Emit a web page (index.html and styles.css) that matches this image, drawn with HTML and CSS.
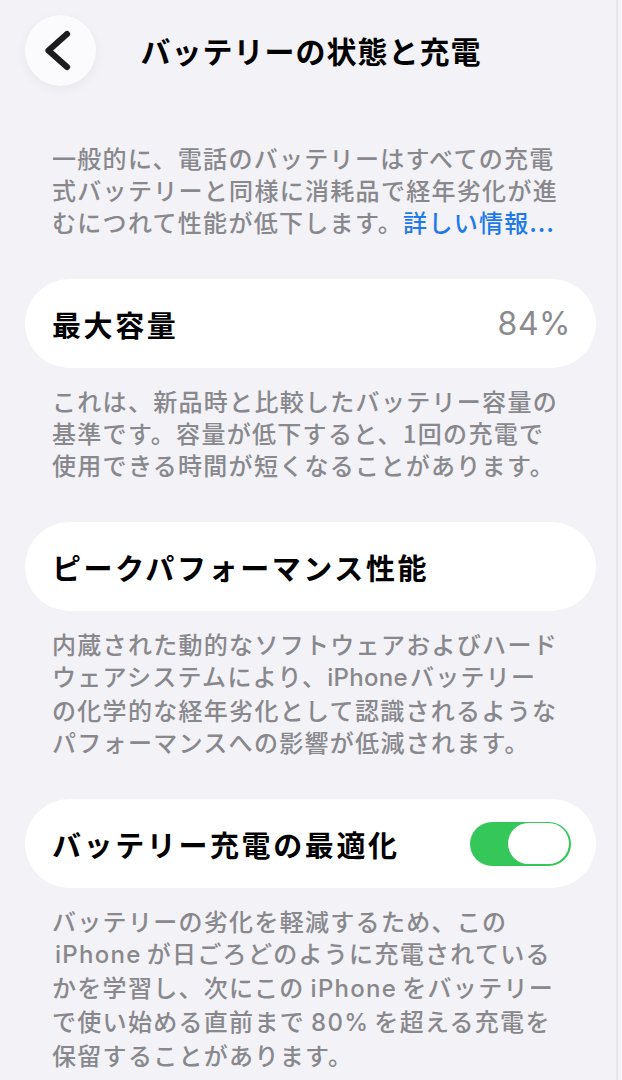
FILE: index.html
```html
<!DOCTYPE html>
<html lang="ja">
<head>
<meta charset="utf-8">
<title>バッテリーの状態と充電</title>
<link rel="stylesheet" href="styles.css">
</head>
<body>
<div class="page">
  <header class="header">
    <button class="back" aria-label="戻る">
      <svg width="71" height="71" viewBox="0 0 71 71"><path d="M42 19 L23.5 35.5 L42 52" fill="none" stroke="#1c1c1e" stroke-width="6.2" stroke-linecap="round" stroke-linejoin="round"/></svg>
    </button>
    <h1 class="title">バッテリーの状態と充電</h1>
    <span class="spacer"></span>
  </header>

  <p class="note intro">一般的に、電話のバッテリーはすべての充電<br>式バッテリーと同様に消耗品で経年劣化が進<br>むにつれて性能が低下します。<a class="link" href="#">詳しい情報...</a></p>

  <div class="card">
    <span class="label">最大容量</span>
    <span class="value">84%</span>
  </div>
  <p class="note">これは、新品時と比較したバッテリー容量の<br>基準です。容量が低下すると、1回の充電で<br>使用できる時間が短くなることがあります。</p>

  <div class="card">
    <span class="label">ピークパフォーマンス性能</span>
  </div>
  <p class="note">内蔵された動的なソフトウェアおよびハード<br>ウェアシステムにより、<span class="lat tight">iPhone</span>バッテリー<br>の化学的な経年劣化として認識されるような<br>パフォーマンスへの影響が低減されます。</p>

  <div class="card">
    <span class="label">バッテリー充電の最適化</span>
    <span class="toggle"><span class="knob"></span></span>
  </div>
  <p class="note">バッテリーの劣化を軽減するため、この<br><span class="lat lead">iPhone</span>が日ごろどのように充電されている<br>かを学習し、次にこの<span class="lat">iPhone</span>をバッテリー<br>で使い始める直前まで<span class="lat">80%</span>を超える充電を<br>保留することがあります。</p>
</div>
</body>
</html>
```

FILE: styles.css
```css
html, body {
  margin: 0;
  padding: 0;
}

body {
  background: #f2f2f7;
  font-family: "Noto Sans CJK JP", "Noto Sans", sans-serif;
}

.page {
  width: 622px;
  min-height: 1080px;
  background: linear-gradient(to right, #f2f2f7 616px, #e6e6eb 616px, #e6e6eb 618px, #f3f3f8 618px);
}

.header {
  display: grid;
  grid-template-columns: 71px 1fr 71px;
  align-items: center;
  height: 71px;
  padding: 15px 25px 0 25px;
}

.back {
  width: 71px;
  height: 71px;
  border: none;
  padding: 0;
  margin: 0;
  border-radius: 50%;
  background: #fbfbfd;
  box-shadow: 0 3px 12px rgba(0, 0, 0, 0.05);
  display: flex;
  align-items: center;
  justify-content: center;
}

.back svg {
  display: block;
}

.title {
  margin: 0;
  text-align: center;
  font-size: 30px;
  font-weight: 700;
  letter-spacing: 1px;
  color: #000;
  line-height: 67px;
  white-space: nowrap;
}

.note {
  margin: 0;
  padding: 17px 52px 0 52px;
  font-size: 24px;
  font-weight: 500;
  line-height: 32px;
  letter-spacing: 1.3px;
  color: #88888d;
  white-space: nowrap;
}

.intro {
  padding-top: 56px;
}

.link {
  color: #1f7ae8;
  text-decoration: none;
  font-weight: 500;
}

.lat {
  font-family: "Inter", "Noto Sans CJK JP", sans-serif;
  letter-spacing: 1.3px;
  margin: 0 5px 0 6px;
}

.lead {
  margin-left: 3px;
}

.tight {
  letter-spacing: 0.3px;
  margin: 0 2px 0 0;
}

.card {
  box-sizing: border-box;
  margin: 41px 26px 0 25px;
  height: 89px;
  background: #fff;
  border-radius: 45px;
  display: flex;
  align-items: center;
  justify-content: space-between;
  padding: 0 25px 0 27px;
}

.label {
  font-size: 29px;
  font-weight: 700;
  letter-spacing: 2.6px;
  color: #000;
  white-space: nowrap;
}

.value {
  font-family: "Inter", sans-serif;
  font-size: 32px;
  letter-spacing: 0.5px;
  color: #8a8a8e;
  margin-right: 0;
}

.toggle {
  box-sizing: border-box;
  width: 101px;
  height: 44px;
  border-radius: 22px;
  background: #36c75a;
  padding: 1.5px 2px;
  display: flex;
  justify-content: flex-end;
}

.knob {
  width: 61px;
  height: 41px;
  border-radius: 20.5px;
  background: #fff;
}
```
